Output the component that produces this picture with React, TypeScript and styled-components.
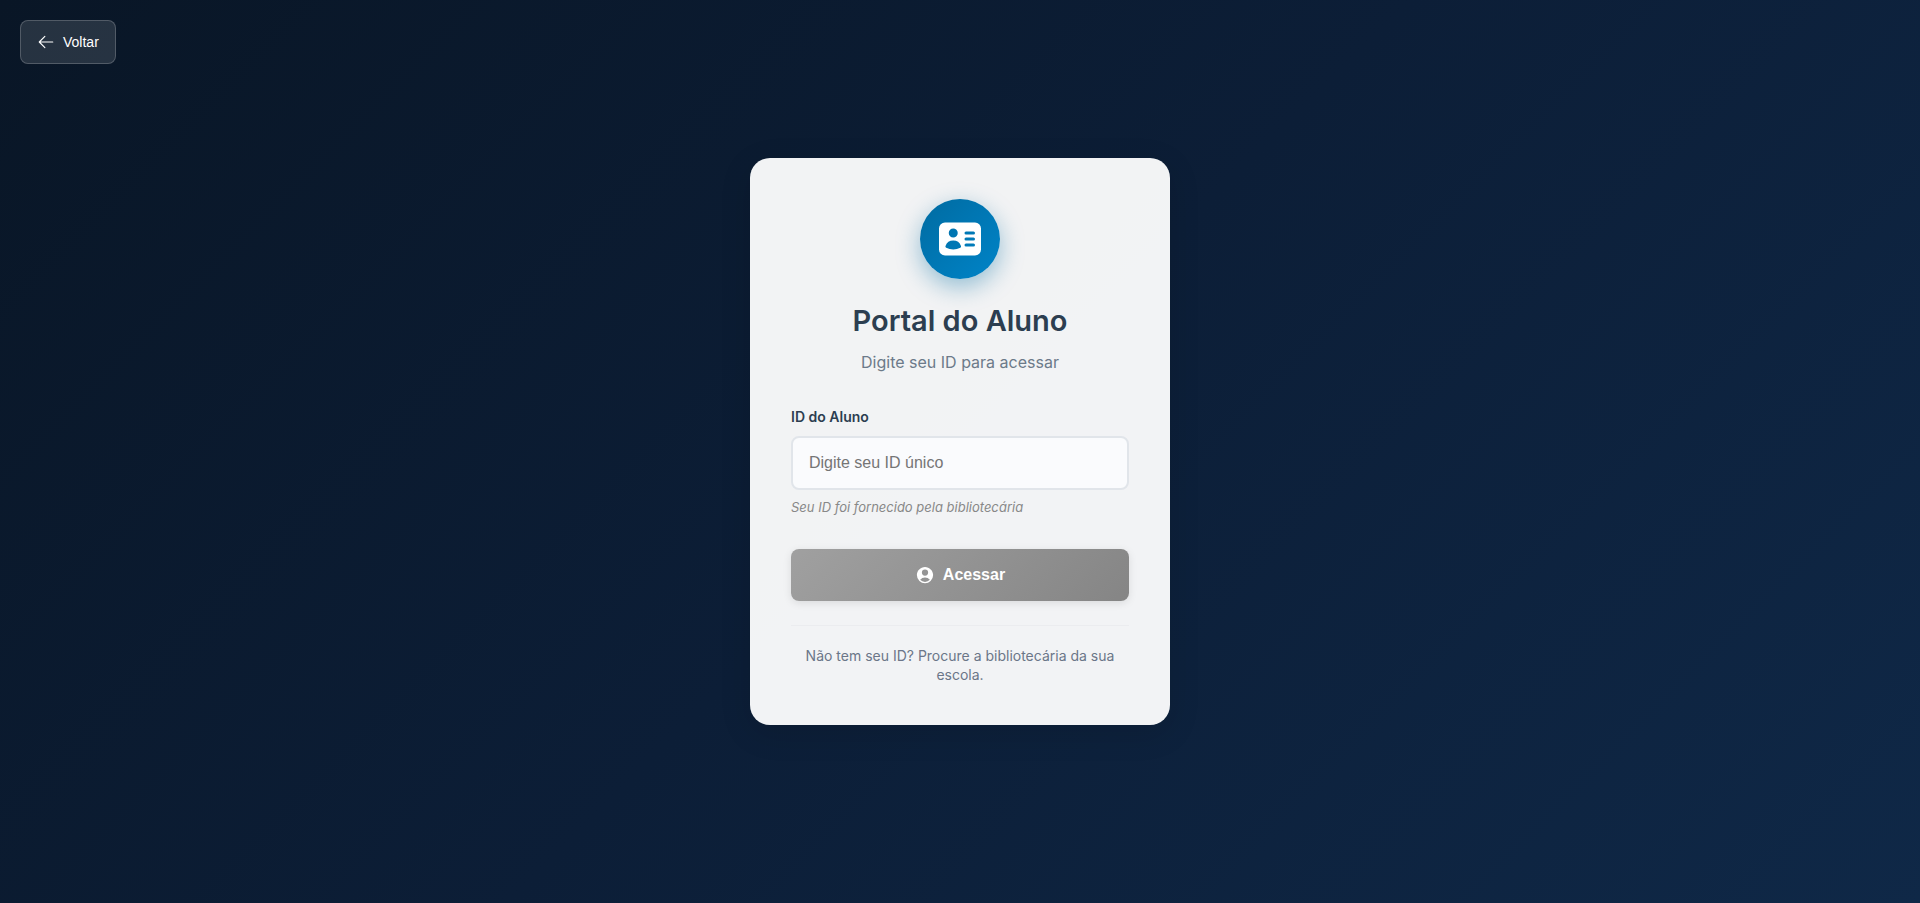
import React, { useState } from "react";
import styled, { createGlobalStyle } from "styled-components";
import { HiIdentification, HiOutlineArrowLeft, HiUserCircle } from "react-icons/hi2";

const GlobalStyle = createGlobalStyle`
  *, *::before, *::after {
    box-sizing: border-box;
  }

  body {
    margin: 0;
    font-family: Inter, "Liberation Sans", sans-serif;
  }
`;

const Page = styled.div`
  min-height: 100vh;
  display: flex;
  align-items: center;
  justify-content: center;
  padding: 20px 20px 40px;
  background: linear-gradient(135deg, #091626 0%, #0c1e37 50%, #0f2847 100%);
`;

const BackButton = styled.button`
  position: absolute;
  top: 20px;
  left: 20px;
  display: flex;
  align-items: center;
  gap: 8px;
  padding: 12px 16px;
  border: 1px solid rgba(255, 255, 255, 0.2);
  border-radius: 8px;
  background: rgba(255, 255, 255, 0.12);
  color: #fff;
  font-family: "Liberation Sans", Arial, sans-serif;
  font-size: 14px;
  line-height: 18px;
  cursor: pointer;
`;

const Card = styled.main`
  width: 100%;
  max-width: 420px;
  padding: 41px;
  border-radius: 20px;
  background: rgba(255, 255, 255, 0.95);
  box-shadow: 0 8px 32px rgba(0, 0, 0, 0.12);
`;

const Header = styled.header`
  display: flex;
  flex-direction: column;
  align-items: center;
  margin-bottom: 32px;
  text-align: center;
`;

const Emblem = styled.div`
  display: flex;
  align-items: center;
  justify-content: center;
  width: 80px;
  height: 80px;
  margin-bottom: 24px;
  border-radius: 50%;
  background: linear-gradient(135deg, #006ba1 0%, #0084c8 100%);
  color: #fff;
  box-shadow: 0 8px 24px rgba(0, 107, 161, 0.4);
`;

const Title = styled.h1`
  margin: 0 0 12px;
  color: #2c3e50;
  font-size: 29px;
  font-weight: 600;
  line-height: 35px;
`;

const Subtitle = styled.p`
  margin: 0;
  color: #6c7a89;
  font-size: 16px;
  line-height: 24px;
`;

const Form = styled.form`
  display: flex;
  flex-direction: column;
  gap: 32px;
`;

const Field = styled.div`
  display: flex;
  flex-direction: column;
  gap: 8px;
`;

const Label = styled.label`
  color: #2c3e50;
  font-size: 14px;
  font-weight: 600;
  line-height: 22px;
`;

const Input = styled.input`
  width: 100%;
  padding: 16px;
  border: 2px solid #e1e5ea;
  border-radius: 8px;
  background: #fafbfd;
  color: #2c3e50;
  font-family: "Liberation Sans", Arial, sans-serif;
  font-size: 16px;
  line-height: 18px;
  outline: none;

  &::placeholder {
    color: #757575;
  }
`;

const Hint = styled.small`
  color: #888;
  font-size: 13px;
  font-style: italic;
  line-height: 19px;
`;

const SubmitButton = styled.button`
  display: flex;
  align-items: center;
  justify-content: center;
  gap: 8px;
  width: 100%;
  padding: 16px;
  border: none;
  border-radius: 8px;
  background: linear-gradient(135deg, #a0a0a0 0%, #858585 100%);
  box-shadow: 0 2px 8px rgba(0, 0, 0, 0.1);
  color: #fff;
  font-family: "Liberation Sans", Arial, sans-serif;
  font-size: 16px;
  font-weight: 600;
  line-height: 20px;
`;

const Footer = styled.footer`
  margin-top: 24px;
  padding-top: 20px;
  border-top: 1px solid #ebecef;
  color: #6b7688;
  font-size: 14px;
  line-height: 19px;
  text-align: center;
`;

const FooterText = styled.p`
  margin: 0;
`;

export default function App() {
  const [studentId, setStudentId] = useState("");

  return (
    <>
      <GlobalStyle />
      <Page>
        <BackButton type="button">
          <HiOutlineArrowLeft size={18} aria-hidden />
          Voltar
        </BackButton>
        <Card>
          <Header>
            <Emblem>
              <HiIdentification size={48} aria-hidden />
            </Emblem>
            <Title>Portal do Aluno</Title>
            <Subtitle>Digite seu ID para acessar</Subtitle>
          </Header>
          <Form onSubmit={(event) => event.preventDefault()}>
            <Field>
              <Label htmlFor="student-id">ID do Aluno</Label>
              <Input
                id="student-id"
                type="text"
                placeholder="Digite seu ID único"
                aria-describedby="student-id-hint"
                value={studentId}
                onChange={(event) => setStudentId(event.target.value)}
              />
              <Hint id="student-id-hint">Seu ID foi fornecido pela bibliotecária</Hint>
            </Field>
            <SubmitButton type="submit" disabled={!studentId.trim()}>
              <HiUserCircle size={20} aria-hidden />
              Acessar
            </SubmitButton>
          </Form>
          <Footer>
            <FooterText>Não tem seu ID? Procure a bibliotecária da sua escola.</FooterText>
          </Footer>
        </Card>
      </Page>
    </>
  );
}
